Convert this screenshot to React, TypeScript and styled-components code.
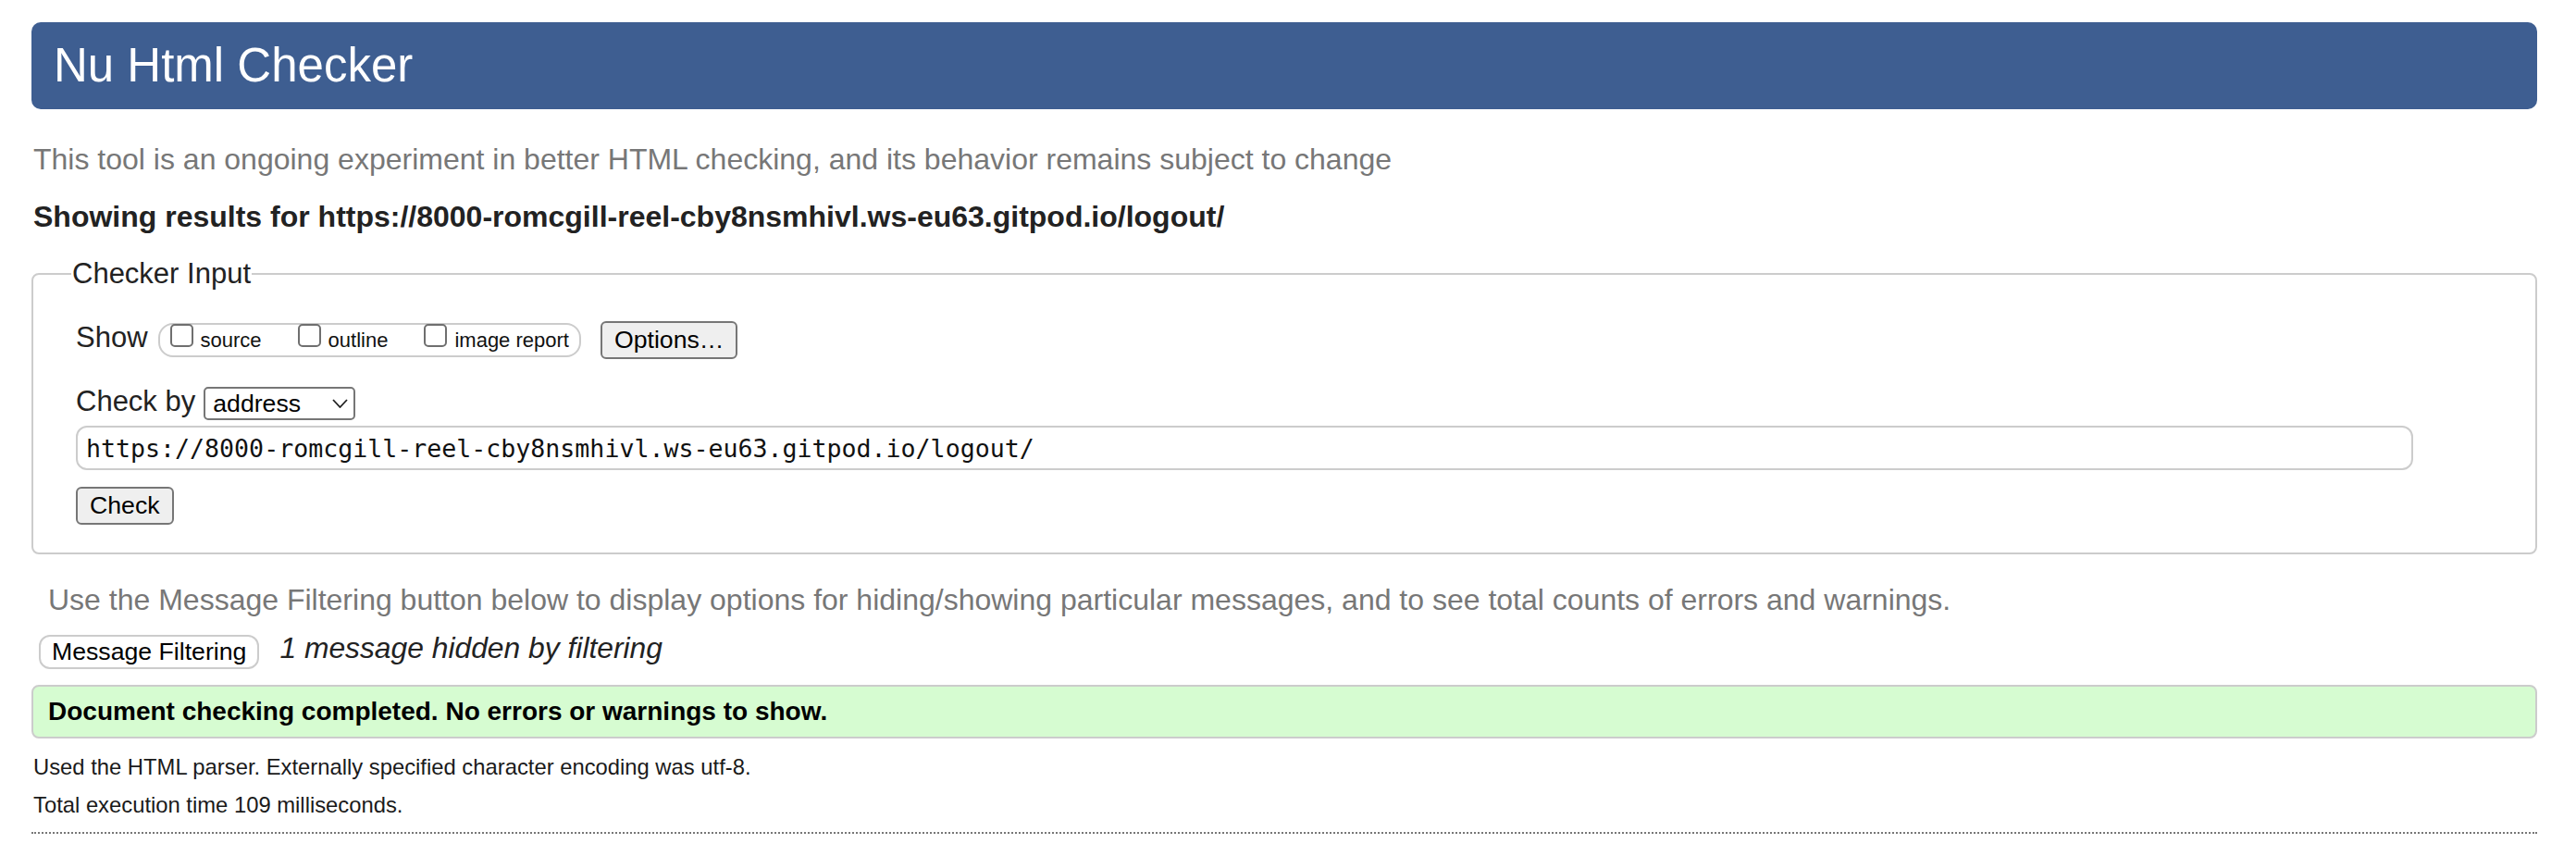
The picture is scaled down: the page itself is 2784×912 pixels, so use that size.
import React from 'react';
import styled, { createGlobalStyle } from 'styled-components';

const GlobalStyle = createGlobalStyle`
  html, body { margin: 0; padding: 0; background: #fff; }
  body { font-family: "Liberation Sans", Arial, Helvetica, sans-serif; color: #222; }
  * { box-sizing: border-box; }
`;

const Page = styled.main`
  width: 2708px;
  margin-left: 34px;
  padding-top: 24px;
  display: flex;
  flex-direction: column;
`;

const Title = styled.h1`
  margin: 0;
  height: 94px;
  line-height: 94px;
  padding-left: 24px;
  background: #3e5e91;
  color: #fff;
  font-size: 51px;
  font-weight: normal;
  border-radius: 10px;
`;

const Intro = styled.p`
  margin: 34px 0 0 2px;
  font-size: 32px;
  line-height: 40px;
  color: #777;
`;

const Showing = styled.p`
  margin: 22px 0 0 2px;
  font-size: 32px;
  line-height: 40px;
  font-weight: bold;
  color: #222;
`;

const Fieldset = styled.fieldset`
  margin: 24px 0 0;
  padding: 0;
  border: 2px solid #ccc;
  border-radius: 8px;
  min-width: 0;
`;

const Legend = styled.legend`
  margin-left: 41px;
  padding: 0 1px;
  font-size: 31px;
  line-height: 36px;
  color: #222;
`;

const FieldBody = styled.div`
  display: flex;
  flex-direction: column;
  align-items: flex-start;
  padding: 33px 0 30px 46px;
`;

const Row = styled.div<{ $gap?: number }>`
  display: flex;
  align-items: flex-start;
  margin-top: ${(p) => p.$gap ?? 0}px;
`;

const RowLabel = styled.span<{ $space: number }>`
  font-size: 31px;
  line-height: 36px;
  color: #222;
  margin-right: ${(p) => p.$space}px;
`;

const OptionsGroup = styled.div`
  margin-top: 2px;
  height: 37px;
  border: 2px solid #ccc;
  border-radius: 16px;
  display: flex;
  align-items: flex-start;
  padding: 0 11px;
`;

const CheckItem = styled.label`
  display: flex;
  align-items: flex-start;
  margin-right: 39px;
  &:last-child { margin-right: 0; }
`;

const CheckBox = styled.input`
  appearance: none;
  width: 25px;
  height: 25px;
  margin: -1px 8px 0 0;
  border: 2px solid #6f6f6f;
  border-radius: 5px;
  background: #fff;
`;

const CheckText = styled.span`
  font-size: 22px;
  line-height: 26px;
  margin-top: 4px;
  color: #111;
`;

const Button = styled.button<{ $soft?: boolean; $h?: number }>`
  height: ${(p) => p.$h ?? 41}px;
  padding: 0 ${(p) => (p.$soft ? 12 : 13)}px;
  font-family: "Liberation Sans", Arial, sans-serif;
  font-size: 26.67px;
  color: #000;
  background: ${(p) => (p.$soft ? '#fff' : '#efefef')};
  border: 2px solid ${(p) => (p.$soft ? '#ccc' : '#767676')};
  border-radius: ${(p) => (p.$soft ? 12 : 6)}px;
  cursor: default;
`;

const OptionsButton = styled(Button)`
  margin-left: 21px;
`;

const SelectBox = styled.div`
  margin-top: 2px;
  width: 164px;
  height: 36px;
  border: 2px solid #767676;
  border-radius: 5px;
  display: flex;
  align-items: center;
  padding: 0 6px 0 8px;
  background: #fff;
`;

const Select = styled.select`
  appearance: none;
  border: none;
  background: transparent;
  margin: 0;
  padding: 0;
  flex: 1;
  min-width: 0;
  font-family: "Liberation Sans", Arial, sans-serif;
  font-size: 26.67px;
  color: #000;
  outline: none;
`;

const UrlInput = styled.input`
  margin-top: 6px;
  width: 2526px;
  height: 48px;
  border: 2px solid #ccc;
  border-radius: 12px;
  padding: 0 9px;
  font-family: "DejaVu Sans Mono", "Liberation Mono", monospace;
  font-size: 26.6px;
  color: #111;
  outline: none;
`;

const CheckButton = styled(Button)`
  margin-top: 18px;
`;

const Hint = styled.p`
  margin: 29px 0 0 18px;
  font-size: 32px;
  line-height: 40px;
  color: #777;
`;

const FilterRow = styled.div`
  display: flex;
  align-items: flex-start;
  margin-top: 18px;
  padding-left: 8px;
`;

const FilterNote = styled.span`
  margin-left: 22px;
  font-size: 31.8px;
  line-height: 29px;
  font-style: italic;
  color: #222;
`;

const Success = styled.div`
  margin-top: 17px;
  height: 58px;
  border: 2px solid #ccc;
  border-radius: 8px;
  background: #d6fcd1;
  padding-left: 16px;
  font-size: 28px;
  line-height: 54px;
  font-weight: bold;
  color: #000;
`;

const Meta = styled.p<{ $gap: number }>`
  margin: ${(p) => p.$gap}px 0 0 2px;
  font-size: 23.8px;
  line-height: 30px;
  color: #1a1a1a;
`;

const Rule = styled.hr`
  margin: 14px 0 0;
  border: 0;
  border-top: 2px dotted #777;
  height: 0;
  width: 100%;
`;

const Chevron = () => (
  <svg width="17" height="10" viewBox="0 0 17 10" aria-hidden="true">
    <polyline points="1,1 8.5,9 16,1" fill="none" stroke="#222" strokeWidth="1.8" />
  </svg>
);

const url = 'https://8000-romcgill-reel-cby8nsmhivl.ws-eu63.gitpod.io/logout/';

export default function App() {
  return (
    <>
      <GlobalStyle />
      <Page>
        <Title>Nu Html Checker</Title>
        <Intro>This tool is an ongoing experiment in better HTML checking, and its behavior remains subject to change</Intro>
        <Showing>Showing results for {url}</Showing>
        <Fieldset>
          <Legend>Checker Input</Legend>
          <FieldBody>
            <Row>
              <RowLabel $space={11}>Show</RowLabel>
              <OptionsGroup>
                <CheckItem>
                  <CheckBox type="checkbox" />
                  <CheckText>source</CheckText>
                </CheckItem>
                <CheckItem>
                  <CheckBox type="checkbox" />
                  <CheckText>outline</CheckText>
                </CheckItem>
                <CheckItem>
                  <CheckBox type="checkbox" />
                  <CheckText>image report</CheckText>
                </CheckItem>
              </OptionsGroup>
              <OptionsButton type="button">Options…</OptionsButton>
            </Row>
            <Row $gap={28}>
              <RowLabel $space={9}>Check by</RowLabel>
              <SelectBox>
                <Select defaultValue="address">
                  <option value="address">address</option>
                  <option value="file">file upload</option>
                  <option value="text">text input</option>
                </Select>
                <Chevron />
              </SelectBox>
            </Row>
            <UrlInput type="url" defaultValue={url} />
            <CheckButton type="button">Check</CheckButton>
          </FieldBody>
        </Fieldset>
        <Hint>Use the Message Filtering button below to display options for hiding/showing particular messages, and to see total counts of errors and warnings.</Hint>
        <FilterRow>
          <Button type="button" $soft $h={37}>Message Filtering</Button>
          <FilterNote>1 message hidden by filtering</FilterNote>
        </FilterRow>
        <Success>Document checking completed. No errors or warnings to show.</Success>
        <Meta $gap={16}>Used the HTML parser. Externally specified character encoding was utf-8.</Meta>
        <Meta $gap={11}>Total execution time 109 milliseconds.</Meta>
        <Rule />
      </Page>
    </>
  );
}
